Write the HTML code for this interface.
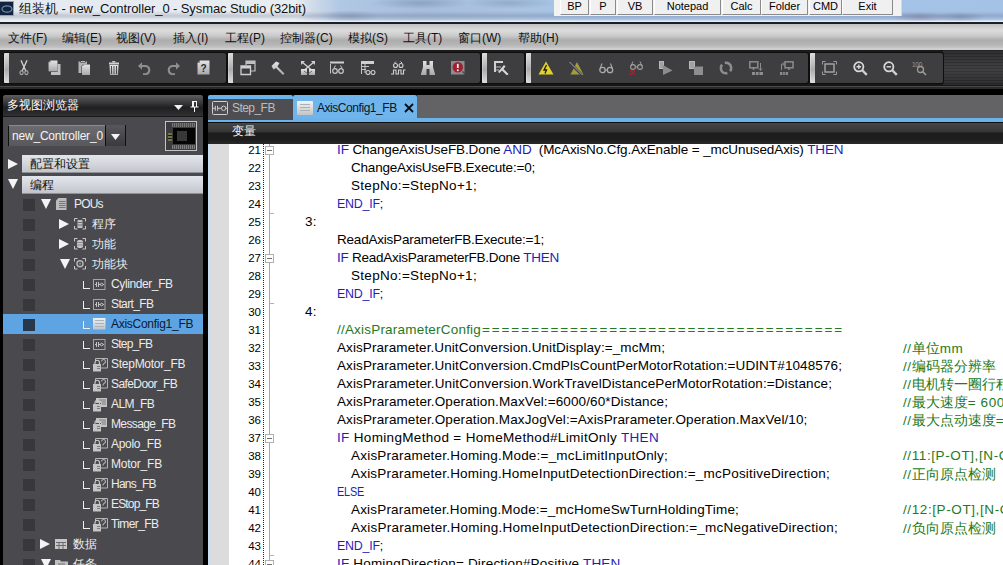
<!DOCTYPE html>
<html><head><meta charset="utf-8">
<style>
*{margin:0;padding:0;box-sizing:border-box}
html,body{width:1003px;height:565px;overflow:hidden;background:#000;font-family:"Liberation Sans",sans-serif}
.a{position:absolute}
.cj{display:inline-block;white-space:nowrap;letter-spacing:0}
.cm .cj{font-size:14px}
#title{left:0;top:0;width:1003px;height:22px;background:linear-gradient(180deg,rgba(255,255,255,0) 0,rgba(255,255,255,0) 11px,rgba(90,90,120,0.25) 16px,rgba(255,255,255,0.1) 20px,#e8eef6 21px,#e8eef6 22px),linear-gradient(90deg,#e4eaf0 0px,#e8edf2 295px,#d0dcea 312px,#b0c8e4 340px,#a6bedc 420px,#aac4e2 520px,#a6c4e6 560px,#a4c2e6 1003px)}
#title .t{left:19px;top:1px;font-size:13px;line-height:15px;letter-spacing:-0.1px;color:#111;white-space:nowrap}
#btns{left:554px;top:0;width:348px;height:16px;background:#f2f2f2;border-right:1px solid #d8d8d8}
.bt{position:absolute;top:0;height:15px;background:#f0f0f0;border-right:1px solid #8a8a8a;border-bottom:1px solid #8a8a8a;border-left:1px solid #fff;font-size:11px;line-height:12px;text-align:center;color:#000}
#tline{left:0;top:22px;width:1003px;height:2px;background:#1c2026}
#menu{left:0;top:24px;width:1003px;height:26px;background:linear-gradient(180deg,#c0c0c0 0%,#d2d2d2 14%,#dcdcdc 25%,#cacaca 45%,#adadad 62%,#b4b4b4 78%,#c2c2c2 90%,#d6d6d6 97%,#c0c0c0 100%)}
.mi{position:absolute;top:7px;font-size:12px;line-height:14px;color:#111;white-space:nowrap}
#tb{left:0;top:50px;width:1003px;height:39px;background:linear-gradient(180deg,#1a1a1a 0,#161616 36px,#4a4a4a 36px,#4a4a4a 37px,#2a2a2a 37px,#2a2a2a 39px)}
.grp{position:absolute;top:2.5px;height:30.5px;background:#3e3e40;border-radius:2px;box-shadow:0 0 0 1px #0e0e0e}
.grip{position:absolute;left:0;top:0;width:5px;height:30.5px;background:linear-gradient(180deg,#dcdcdc 0%,#c4c4c4 30%,#acacac 55%,#c8c8c8 80%,#dedede 100%);border-radius:1px 0 0 1px;box-shadow:inset 1px 0 0 rgba(255,255,255,0.25)}
.ic{position:absolute;top:10px}
#panel{left:3px;top:95px;width:200px;height:470px;background:#4a494e;border-radius:3px 3px 0 0;overflow:hidden}
#ph{left:0;top:0;width:200px;height:21px;background:linear-gradient(180deg,#5c5c5e 0%,#3a3a3c 35%,#202022 60%,#303032 100%)}
.sec{position:absolute;left:19px;width:181px;height:18px;background:linear-gradient(180deg,#e2e5ea 0%,#d2d6dc 55%,#c2c6cc 100%);border-bottom:1px solid #8e9298;font-size:12px;color:#111;padding-left:8px;line-height:18px;white-space:nowrap}
.trt{font-size:12px;line-height:20px;white-space:nowrap}
.row{position:absolute;left:0;width:200px;height:20px;font-size:11.5px;color:#ececec;white-space:nowrap}
.sq{position:absolute;left:20px;top:4px;width:12px;height:12px;background:#38383c}
#ed{left:208px;top:95px;width:795px;height:470px;background:#fff;overflow:hidden}
#tabs{left:0;top:0;width:795px;height:27px;background:#000}
.tabt{font-size:12px;white-space:nowrap}
#code{left:0;top:49px;width:795px;height:421px;background:#fff}
.ln{position:absolute;left:22px;width:31px;text-align:right;font-size:11.5px;line-height:18px;color:#000}
.cl{position:absolute;font-size:13.5px;line-height:18px;color:#000;white-space:pre}
.k{color:#1e1eb8}
.g{color:#237a23}
</style></head><body>
<div id="title" class="a">
  <div class="a" style="left:-1px;top:1px;width:15px;height:15px;background:#14233c;border:1px solid #9aa0a8"><svg class="a" style="left:1px;top:2px" width="12" height="10"><ellipse cx="6" cy="5" rx="5" ry="3.2" fill="none" stroke="#6a8cb8" stroke-width="1.2"/></svg></div>
  <div class="a" style="left:300px;top:0;width:260px;height:21px;background:radial-gradient(ellipse 30px 6px at 50px 16px,rgba(90,100,120,0.25),transparent),radial-gradient(ellipse 50px 6px at 120px 3px,rgba(80,100,130,0.3),transparent),radial-gradient(ellipse 45px 6px at 210px 3px,rgba(80,100,130,0.25),transparent)"></div>
  <div class="a" style="left:880px;top:9px;width:123px;height:12px;background:radial-gradient(ellipse 30px 5px at 40px 8px,rgba(110,90,120,0.35),transparent),radial-gradient(ellipse 25px 5px at 80px 8px,rgba(90,90,110,0.3),transparent)"></div>
  <div class="a t"><span class="cj" style="width:3em">组装机</span> - new_Controller_0 - Sysmac Studio (32bit)</div>
</div>
<div id="btns" class="a">
  <div class="bt" style="left:6px;width:29px">BP</div>
  <div class="bt" style="left:36px;width:26px">P</div>
  <div class="bt" style="left:63px;width:36px">VB</div>
  <div class="bt" style="left:100px;width:67px">Notepad</div>
  <div class="bt" style="left:168px;width:39px">Calc</div>
  <div class="bt" style="left:207px;width:47px">Folder</div>
  <div class="bt" style="left:255px;width:33px">CMD</div>
  <div class="bt" style="left:288px;width:51px">Exit</div>
</div>
<div id="tline" class="a"></div>
<div id="menu" class="a">
  <span class="mi" style="left:8px"><span class="cj" style="width:2em">文件</span>(F)</span>
  <span class="mi" style="left:62px"><span class="cj" style="width:2em">编辑</span>(E)</span>
  <span class="mi" style="left:116px"><span class="cj" style="width:2em">视图</span>(V)</span>
  <span class="mi" style="left:173px"><span class="cj" style="width:2em">插入</span>(I)</span>
  <span class="mi" style="left:225px"><span class="cj" style="width:2em">工程</span>(P)</span>
  <span class="mi" style="left:280px"><span class="cj" style="width:3em">控制器</span>(C)</span>
  <span class="mi" style="left:348px"><span class="cj" style="width:2em">模拟</span>(S)</span>
  <span class="mi" style="left:403px"><span class="cj" style="width:2em">工具</span>(T)</span>
  <span class="mi" style="left:458px"><span class="cj" style="width:2em">窗口</span>(W)</span>
  <span class="mi" style="left:518px"><span class="cj" style="width:2em">帮助</span>(H)</span>
</div>
<div id="tb" class="a">
  <div class="a" style="left:943px;top:0;width:60px;height:35px;background:repeating-linear-gradient(180deg,rgba(0,0,0,0.08) 0 1px,rgba(255,255,255,0.03) 1px 3px),linear-gradient(180deg,#262628 0%,#303032 25%,#3a3a3c 55%,#313133 80%,#262628 100%)"></div>
  <div class="grp" style="left:4px;width:222px"><div class="grip"></div></div>
  <div class="grp" style="left:228px;width:252px"><div class="grip"></div></div>
  <div class="grp" style="left:482px;width:42px"><div class="grip"></div></div>
  <div class="grp" style="left:526px;width:282px"><div class="grip"></div></div>
  <div class="grp" style="left:810px;width:133px"><div class="grip"></div></div>
<svg width="0" height="0" style="position:absolute"><defs><linearGradient id="tg" x1="0" y1="0" x2="0" y2="1"><stop offset="0" stop-color="#e4e4e4"/><stop offset="1" stop-color="#a8a8a8"/></linearGradient></defs></svg>
<svg class="a" style="left:19px;top:10px" width="10" height="16" viewBox="0 0 10 16"><path d="M2.2 0.8L6.8 11M7.8 0.8L3.2 11" stroke="#d0d0d0" stroke-width="1.4" stroke-linecap="round"/><ellipse cx="2.6" cy="12.6" rx="1.6" ry="2" fill="none" stroke="#a4a4a4" stroke-width="1.2"/><ellipse cx="7.4" cy="12.6" rx="1.6" ry="2" fill="none" stroke="#a4a4a4" stroke-width="1.2"/></svg>
<svg class="a" style="left:48px;top:10px" width="13" height="16" viewBox="0 0 13 16"><path d="M3 4H12.5V15H3Z" fill="#c0c0c0"/><path d="M2.5 1H9.5V12H0V3.5Z" fill="#2e2e2e"/><path d="M2.5 0.5H9.5V11.5H0.5V2.5Z" fill="url(#tg)"/><path d="M0.5 2.5L2.5 0.5V2.5Z" fill="#777"/></svg>
<svg class="a" style="left:78px;top:10px" width="13" height="16" viewBox="0 0 13 16"><path d="M0.5 1.5H9V13H0.5Z" fill="#b4b4b4"/><rect x="2.5" y="0.8" width="5" height="2" rx="0.5" fill="#3a3a3a"/><rect x="3" y="1.2" width="4" height="1" fill="#dcdcdc"/><path d="M5 4.5H12V15H3.5V6Z" fill="#2e2e2e"/><path d="M5.5 4.5H12V15H4V6Z" fill="url(#tg)"/><path d="M4 6L5.5 4.5V6Z" fill="#777"/></svg>
<svg class="a" style="left:108px;top:10px" width="12" height="16" viewBox="0 0 12 16"><rect x="4" y="1" width="3.5" height="1.5" rx="0.7" fill="#c8c8c8"/><rect x="1" y="2.5" width="10" height="2" fill="#cfcfcf"/><path d="M1.5 5H10.5L10 15H2Z" fill="url(#tg)"/><rect x="3" y="6" width="1" height="8" fill="#4a4a4a"/><rect x="5.5" y="6" width="1" height="8" fill="#5a5a5a"/><rect x="8" y="6" width="1" height="8" fill="#4a4a4a"/></svg>
<svg class="a" style="left:137px;top:11px" width="15" height="14" viewBox="0 0 15 14"><path d="M1 5L5 1.2V8.8Z" fill="#8e8e8e"/><path d="M4 5H9A4.2 4.2 0 0 1 9 13.2H6" fill="none" stroke="#8e8e8e" stroke-width="2"/></svg>
<svg class="a" style="left:166px;top:11px" width="15" height="14" viewBox="0 0 15 14"><path d="M14 5L10 1.2V8.8Z" fill="#8e8e8e"/><path d="M11 5H6A4.2 4.2 0 0 0 6 13.2H9" fill="none" stroke="#8e8e8e" stroke-width="2"/></svg>
<svg class="a" style="left:197px;top:10px" width="13" height="15" viewBox="0 0 13 15"><path d="M3 0.5H12.5V14.5H0.5V3Z" fill="url(#tg)"/><path d="M3 0.5V3H0.5" fill="#888"/><text x="6.5" y="12" font-family="Liberation Sans" font-weight="bold" font-size="10" text-anchor="middle" fill="#2a2a2a">?</text></svg>
<svg class="a" style="left:240px;top:10px" width="16" height="16" viewBox="0 0 16 16"><path d="M6 1H15V11H6Z" fill="none" stroke="#c0c0c0" stroke-width="1.2"/><path d="M6 1H15V4H6Z" fill="#c0c0c0"/><rect x="0" y="5" width="11" height="9.5" fill="#3e3e3f"/><path d="M1 6H10.5V14.5H1Z" fill="none" stroke="#d0d0d0" stroke-width="1.3"/><path d="M1 6H10.5V8.5H1Z" fill="#d0d0d0"/></svg>
<svg class="a" style="left:271px;top:11px" width="14" height="14" viewBox="0 0 14 14"><path d="M0.5 5L5 0.5L8.5 2L6.5 5.5L13.5 12.5L12 14L5 7L2.5 8.5Z" fill="url(#tg)"/></svg>
<svg class="a" style="left:301px;top:11px" width="14" height="14" viewBox="0 0 14 14"><path d="M1 1L13 11M13 1L1 11" stroke="#d0d0d0" stroke-width="1.4"/><path d="M0 0H4L0 4ZM14 0H10L14 4Z" fill="#d0d0d0"/><path d="M0 8H6V14H0ZM8 8H14V14H8Z" fill="url(#tg)"/><path d="M3 10L7 13M11 10L7 13" stroke="#555" stroke-width="0.8"/></svg>
<svg class="a" style="left:330px;top:11px" width="15" height="13" viewBox="0 0 15 13"><path d="M0.5 3V12.5" stroke="#c4c4c4"/><path d="M0 0.5H14V2.5H0Z" fill="#d0d0d0"/><circle cx="5" cy="10" r="2.3" fill="none" stroke="#c8c8c8" stroke-width="1.2"/><circle cx="11" cy="10" r="2.3" fill="none" stroke="#c8c8c8" stroke-width="1.2"/><path d="M4 7L5.5 4.5M12 7L10.5 4.5" stroke="#c8c8c8"/></svg>
<svg class="a" style="left:361px;top:11px" width="15" height="14" viewBox="0 0 15 14"><path d="M0 0H13V3H0Z" fill="#d0d0d0"/><path d="M0.5 3V13M0 5.5H8M0 8.5H5M4 3V12" stroke="#c4c4c4"/><circle cx="7" cy="11.5" r="2" fill="none" stroke="#d0d0d0" stroke-width="1.1"/><circle cx="12" cy="11.5" r="2" fill="none" stroke="#d0d0d0" stroke-width="1.1"/></svg>
<svg class="a" style="left:391px;top:11px" width="15" height="14" viewBox="0 0 15 14"><circle cx="4.5" cy="4.5" r="2" fill="none" stroke="#d0d0d0" stroke-width="1.1"/><circle cx="10" cy="4.5" r="2" fill="none" stroke="#d0d0d0" stroke-width="1.1"/><path d="M3.5 2L5 0.5M11 2L9.5 0.5" stroke="#d0d0d0"/><path d="M0 13H2.5V9H5V13H7.5V9H10V13H12.5V9H14.5" fill="none" stroke="#d0d0d0" stroke-width="1.1"/></svg>
<svg class="a" style="left:421px;top:11px" width="14" height="14" viewBox="0 0 14 14"><path d="M2 0H5.5V4H8.5V0H12V6L14 13V14H8.5V8H5.5V14H0V13L2 6Z" fill="url(#tg)"/></svg>
<svg class="a" style="left:451px;top:11px" width="14" height="14" viewBox="0 0 14 14"><rect x="0" y="0" width="13.5" height="13.5" fill="#8c8c8c"/><circle cx="6.8" cy="6.2" r="5.2" fill="#a02030"/><path d="M6.8 2.8V7" stroke="#f0f0f0" stroke-width="1.8"/><circle cx="6.8" cy="9.2" r="1" fill="#f0f0f0"/><path d="M11 11H13V13" stroke="#333" stroke-width="0.8" fill="none"/></svg>
<svg class="a" style="left:494px;top:11px" width="15" height="14" viewBox="0 0 15 14"><path d="M0 0H9V2H0ZM0 2V11H2V2Z" fill="#d0d0d0"/><path d="M2 6H7M2 9H5" stroke="#bbb"/><path d="M4 11L10 4L11.5 5.5L9.5 8L14.5 13L13 14.5L8 9.5L5.5 12Z" fill="#d8d8d8"/></svg>
<svg class="a" style="left:538px;top:11px" width="16" height="14" viewBox="0 0 16 14"><path d="M8 0.5L15.5 13.5H0.5Z" fill="#e2d22a"/><path d="M8.5 4L6 9H8.5L7 12.5" stroke="#1a1a1a" stroke-width="1.3" fill="none"/></svg>
<svg class="a" style="left:568px;top:11px" width="16" height="14" viewBox="0 0 16 14"><path d="M9 1L15.5 13.5H2.5Z" fill="#a39c3a"/><path d="M1 1L14 14" stroke="#3e3e3f" stroke-width="2.5"/><path d="M1.5 1L14.5 14" stroke="#a8a8a8" stroke-width="1"/></svg>
<svg class="a" style="left:599px;top:12px" width="15" height="12" viewBox="0 0 15 12"><circle cx="3.5" cy="8" r="2.7" fill="none" stroke="#aaa" stroke-width="1.3"/><circle cx="11" cy="8" r="2.7" fill="none" stroke="#aaa" stroke-width="1.3"/><path d="M6 8H8.5M1 7L3 1.5M13.5 7L11.5 1.5" stroke="#aaa" stroke-width="1.1" fill="none"/></svg>
<svg class="a" style="left:629px;top:11px" width="15" height="14" viewBox="0 0 15 14"><circle cx="4" cy="6" r="2.4" fill="none" stroke="#a0a0a0" stroke-width="1.1"/><circle cx="11" cy="6" r="2.4" fill="none" stroke="#a0a0a0" stroke-width="1.1"/><path d="M6.4 6H8.6M2 5L4 0.5M13 5L11 0.5" stroke="#a0a0a0" fill="none"/><path d="M1 9L6 14M6 9L1 14" stroke="#a02030" stroke-width="1.8"/></svg>
<svg class="a" style="left:658px;top:11px" width="15" height="14" viewBox="0 0 15 14"><path d="M1 0H6V8H1Z" fill="#b8b8b8"/><path d="M2 2H5M2 4H5M2 6H5" stroke="#777" stroke-width="0.7"/><path d="M5 4L14.5 9.5L5 14Z" fill="#8c8c8c"/></svg>
<svg class="a" style="left:689px;top:11px" width="14" height="14" viewBox="0 0 14 14"><path d="M0 0H6V8H0Z" fill="#b8b8b8"/><path d="M1 2H5M1 4H5M1 6H5" stroke="#777" stroke-width="0.7"/><rect x="5" y="5.5" width="9" height="8.5" fill="#8e8e8e"/></svg>
<svg class="a" style="left:719px;top:11px" width="14" height="14" viewBox="0 0 14 14"><circle cx="7" cy="7" r="5.2" fill="none" stroke="#8c8c8c" stroke-width="2.6" stroke-dasharray="12.5 3.2" transform="rotate(79 7 7)"/></svg>
<svg class="a" style="left:749px;top:11px" width="15" height="14" viewBox="0 0 15 14"><rect x="0.8" y="0.8" width="8" height="6" fill="none" stroke="#8c8c8c" stroke-width="1.5"/><path d="M4.5 7V9" stroke="#8c8c8c" stroke-width="1.5"/><path d="M11.5 2V9M10 7.5L11.5 9.5L13 7.5" stroke="#8c8c8c" fill="none"/><path d="M3 11H14V14H3Z" fill="#8c8c8c"/><path d="M6.5 11V14M10 11V14" stroke="#3e3e3f" stroke-width="0.8"/></svg>
<svg class="a" style="left:779px;top:11px" width="15" height="14" viewBox="0 0 15 14"><rect x="6" y="0.8" width="8" height="6" fill="none" stroke="#8c8c8c" stroke-width="1.5"/><path d="M10 7V9" stroke="#8c8c8c" stroke-width="1.5"/><path d="M2.5 9V3H5M4 1.5L5.5 3L4 4.5" stroke="#8c8c8c" fill="none"/><path d="M1 11H9V14H1Z" fill="#8c8c8c"/><path d="M3.7 11V14M6.3 11V14" stroke="#3e3e3f" stroke-width="0.8"/></svg>
<svg class="a" style="left:822px;top:11px" width="15" height="14" viewBox="0 0 15 14"><path d="M0.5 3.5V0.5H3.5M11.5 0.5H14.5V3.5M14.5 10.5V13.5H11.5M3.5 13.5H0.5V10.5" fill="none" stroke="#9c9c9c"/><rect x="3" y="3" width="9" height="8" fill="none" stroke="#a8a8a8" stroke-width="1.4"/></svg>
<svg class="a" style="left:853px;top:11px" width="15" height="15" viewBox="0 0 15 15"><circle cx="5.8" cy="5.8" r="4.6" fill="none" stroke="#d8d8d8" stroke-width="1.8"/><path d="M3.5 5.8H8.1M5.8 3.5V8.1" stroke="#d8d8d8" stroke-width="1.4"/><path d="M9 9L13.8 13.8" stroke="#d0d0d0" stroke-width="2.4"/></svg>
<svg class="a" style="left:883px;top:11px" width="15" height="15" viewBox="0 0 15 15"><circle cx="5.8" cy="5.8" r="4.6" fill="none" stroke="#d8d8d8" stroke-width="1.8"/><path d="M3.5 5.8H8.1" stroke="#d8d8d8" stroke-width="1.4"/><path d="M9 9L13.8 13.8" stroke="#d0d0d0" stroke-width="2.4"/></svg>
<svg class="a" style="left:912px;top:11px" width="15" height="15" viewBox="0 0 15 15"><text x="0" y="6" font-family="Liberation Sans" font-size="6.5" fill="#9c9c9c" letter-spacing="-0.3">100</text><circle cx="8.5" cy="8.5" r="3" fill="none" stroke="#9c9c9c" stroke-width="1.3"/><path d="M10.5 10.5L14 14" stroke="#9c9c9c" stroke-width="1.6"/></svg>
</div>
<div id="panel" class="a">
  <div id="ph" class="a"><div class="a" style="left:4px;top:3px;font-size:12px;line-height:15px;color:#fafafa;white-space:nowrap"><span class="cj" style="width:6em">多视图浏览器</span></div>
   <svg class="a" style="left:171px;top:10px" width="9" height="5"><path d="M0 0H9L4.5 5Z" fill="#f0f0f0"/></svg>
   <svg class="a" style="left:187px;top:6px" width="9" height="11" viewBox="0 0 9 11"><path d="M2 0.5H7M2.5 0.5V6M6.5 0.5V6M0.5 6H8.5M4.5 6V11" stroke="#f4f4f4" fill="none"/><rect x="2" y="1" width="2" height="5" fill="#f4f4f4"/></svg>
  </div>
  <div class="a" style="left:0;top:21px;width:200px;height:1px;background:#18181a"></div>
  <div class="a" style="left:5px;top:30px;width:118px;height:21px;background:linear-gradient(180deg,#6c6c70,#58585c);border-left:1px solid #111;border-top:1px solid #8c8c90;border-right:1px solid #111">
    <div class="a" style="left:3px;top:3px;font-size:12px;color:#f4f4f4;letter-spacing:-0.2px;white-space:nowrap">new_Controller_0</div>
    <div class="a" style="left:96px;top:-1px;width:1px;height:21px;background:#101010"></div>
    <div class="a" style="left:97px;top:-1px;width:19px;height:21px;background:linear-gradient(180deg,#58585c,#3a3a3e)"></div><div class="a" style="left:116px;top:-1px;width:1px;height:21px;background:#101010"></div>
    <svg class="a" style="left:102px;top:8px" width="9" height="6"><path d="M0 0H9L4.5 6Z" fill="#f4f4f4"/></svg>
  </div>
  <div class="a" style="left:162px;top:26px;width:32px;height:30px;border:1px solid #c4c4c4;background:#3c3c3e">
    <div class="a" style="left:6px;top:1px;width:23px;height:4px;background:repeating-linear-gradient(90deg,#767676 0 1px,#4e4e4e 1px 2px)"></div>
    <div class="a" style="left:7px;top:6px;width:22px;height:16px;background:#050505"></div>
    <div class="a" style="left:11px;top:9px;width:10px;height:10px;background:#383838"></div>
    <div class="a" style="left:6px;top:23px;width:23px;height:4px;background:repeating-linear-gradient(90deg,#7e7e7e 0 1px,#4e4e4e 1px 2px)"></div>
    <div class="a" style="left:2px;top:11px;width:4px;height:8px;background:repeating-linear-gradient(180deg,#74743c 0 2px,#1a1a1a 2px 3px)"></div>
  </div>
  <svg class="a" style="left:5px;top:64px" width="11" height="10"><path d="M0 0L10 5L0 10Z" fill="#f4f4f4"/></svg>
  <div class="sec" style="top:60px"><span class="cj" style="width:5em">配置和设置</span></div>
  <svg class="a" style="left:5px;top:84px" width="10" height="10"><path d="M0 0H10L5 10Z" fill="#f4f4f4"/></svg>
  <div class="sec" style="top:81px"><span class="cj" style="width:2em">编程</span></div>
<svg width="0" height="0" style="position:absolute"><defs><linearGradient id="dg2" x1="0" y1="0" x2="0" y2="1"><stop offset="0" stop-color="#f0f0f0"/><stop offset="1" stop-color="#c0c4c8"/></linearGradient></defs></svg>
<div class="a" style="left:0;top:219px;width:200px;height:20px;background:#5ea3e2"></div>
<div class="a" style="left:20px;top:104px;width:12px;height:12px;background:#38373c"></div>
<div class="a" style="left:20px;top:124px;width:12px;height:12px;background:#38373c"></div>
<div class="a" style="left:20px;top:144px;width:12px;height:12px;background:#38373c"></div>
<div class="a" style="left:20px;top:164px;width:12px;height:12px;background:#38373c"></div>
<div class="a" style="left:20px;top:184px;width:12px;height:12px;background:#38373c"></div>
<div class="a" style="left:20px;top:204px;width:12px;height:12px;background:#38373c"></div>
<div class="a" style="left:20px;top:224px;width:12px;height:12px;background:#27384c"></div>
<div class="a" style="left:20px;top:244px;width:12px;height:12px;background:#38373c"></div>
<div class="a" style="left:20px;top:264px;width:12px;height:12px;background:#38373c"></div>
<div class="a" style="left:20px;top:284px;width:12px;height:12px;background:#38373c"></div>
<div class="a" style="left:20px;top:304px;width:12px;height:12px;background:#38373c"></div>
<div class="a" style="left:20px;top:324px;width:12px;height:12px;background:#38373c"></div>
<div class="a" style="left:20px;top:344px;width:12px;height:12px;background:#38373c"></div>
<div class="a" style="left:20px;top:364px;width:12px;height:12px;background:#38373c"></div>
<div class="a" style="left:20px;top:384px;width:12px;height:12px;background:#38373c"></div>
<div class="a" style="left:20px;top:404px;width:12px;height:12px;background:#38373c"></div>
<div class="a" style="left:20px;top:424px;width:12px;height:12px;background:#38373c"></div>
<div class="a" style="left:20px;top:444px;width:12px;height:12px;background:#38373c"></div>
<div class="a" style="left:20px;top:464px;width:12px;height:12px;background:#38373c"></div>
<svg class="a" style="left:38px;top:104px" width="10" height="10"><path d="M0 0H10L5 10Z" fill="#f4f4f4"/></svg>
<svg class="a" style="left:53px;top:103px" width="11" height="12" viewBox="0 0 11 12"><path d="M2.5 0H10.5V12H0V2.5Z" fill="#bcbcbc"/><path d="M3 3.5H9.5M3 5.5H9.5M3 7.5H9.5M3 9.5H9.5" stroke="#6e6e6e" stroke-width="0.9"/></svg>
<div class="a trt" style="left:71px;top:99px;color:#ececec;letter-spacing:-0.8px">POUs</div>
<svg class="a" style="left:56px;top:124px" width="11" height="10"><path d="M0 0L10 5L0 10Z" fill="#f4f4f4"/></svg>
<svg class="a" style="left:71px;top:123px" width="13" height="12" viewBox="0 0 13 12"><path d="M0.5 3.5V0.5H3.5M8.5 0.5H11.5V3.5M11.5 8V11H8.5M3.5 11H0.5V8" fill="none" stroke="#c8c8c8"/><rect x="3.5" y="2" width="5" height="8" fill="#c0c0c0"/><path d="M3.5 4.5H8.5M3.5 7H8.5" stroke="#6a6a6a" stroke-width="0.9"/></svg>
<div class="a trt" style="left:89px;top:119px;color:#ececec;letter-spacing:-0.4px"><span class="cj" style="width:2em">程序</span></div>
<svg class="a" style="left:56px;top:144px" width="11" height="10"><path d="M0 0L10 5L0 10Z" fill="#f4f4f4"/></svg>
<svg class="a" style="left:71px;top:143px" width="13" height="12" viewBox="0 0 13 12"><path d="M0.5 3.5V0.5H3.5M8.5 0.5H11.5V3.5M11.5 8V11H8.5M3.5 11H0.5V8" fill="none" stroke="#c8c8c8"/><rect x="3" y="2" width="6" height="8" rx="2" fill="#c8c8c8"/><path d="M2.5 4.5H9.5M2.5 7H9.5" stroke="#7a7a7a" stroke-width="0.8"/></svg>
<div class="a trt" style="left:89px;top:139px;color:#ececec;letter-spacing:-0.4px"><span class="cj" style="width:2em">功能</span></div>
<svg class="a" style="left:57px;top:164px" width="10" height="10"><path d="M0 0H10L5 10Z" fill="#f4f4f4"/></svg>
<svg class="a" style="left:71px;top:163px" width="13" height="12" viewBox="0 0 13 12"><path d="M0.5 3.5V0.5H3.5M8.5 0.5H11.5V3.5M11.5 8V11H8.5M3.5 11H0.5V8" fill="none" stroke="#c8c8c8"/><circle cx="6" cy="5.8" r="3" fill="none" stroke="#b8b8b8" stroke-width="1.4"/><circle cx="6" cy="5.8" r="1" fill="#909090"/></svg>
<div class="a trt" style="left:89px;top:159px;color:#ececec;letter-spacing:-0.4px"><span class="cj" style="width:3em">功能块</span></div>
<div class="a" style="left:80px;top:186px;width:7px;height:8px;border-left:1px solid #f0f0f0;border-bottom:1px solid #f0f0f0"></div>
<svg class="a" style="left:90px;top:184px" width="13" height="11" viewBox="0 0 13 11"><rect x="0.5" y="0.5" width="11.5" height="10" fill="none" stroke="#a4a4a6"/><path d="M2 5.5H3.5M3.5 3V8M5.5 3V8M5.5 5.5H7.5M10 5.5H11" stroke="#c4c4c4" fill="none"/><circle cx="8.7" cy="5.5" r="1.3" fill="none" stroke="#c4c4c4"/></svg>
<div class="a trt" style="left:108px;top:179px;color:#ececec;letter-spacing:-0.394px">Cylinder_FB</div>
<div class="a" style="left:80px;top:206px;width:7px;height:8px;border-left:1px solid #f0f0f0;border-bottom:1px solid #f0f0f0"></div>
<svg class="a" style="left:90px;top:204px" width="13" height="11" viewBox="0 0 13 11"><rect x="0.5" y="0.5" width="11.5" height="10" fill="none" stroke="#a4a4a6"/><path d="M2 5.5H3.5M3.5 3V8M5.5 3V8M5.5 5.5H7.5M10 5.5H11" stroke="#c4c4c4" fill="none"/><circle cx="8.7" cy="5.5" r="1.3" fill="none" stroke="#c4c4c4"/></svg>
<div class="a trt" style="left:108px;top:199px;color:#ececec;letter-spacing:-0.62px">Start_FB</div>
<div class="a" style="left:80px;top:226px;width:7px;height:8px;border-left:1px solid #f0f0f0;border-bottom:1px solid #f0f0f0"></div>
<svg class="a" style="left:90px;top:223px" width="13" height="12" viewBox="0 0 13 12"><rect x="0" y="0" width="12.5" height="11.5" fill="url(#dg2)"/><path d="M2 2.5H11M2 5.5H11M2 8.5H11" stroke="#a8b4c0"/></svg>
<div class="a trt" style="left:108px;top:219px;color:#0c1a30;letter-spacing:-0.275px">AxisConfig1_FB</div>
<div class="a" style="left:80px;top:246px;width:7px;height:8px;border-left:1px solid #f0f0f0;border-bottom:1px solid #f0f0f0"></div>
<svg class="a" style="left:90px;top:244px" width="13" height="11" viewBox="0 0 13 11"><rect x="0.5" y="0.5" width="11.5" height="10" fill="none" stroke="#a4a4a6"/><path d="M2 5.5H3.5M3.5 3V8M5.5 3V8M5.5 5.5H7.5M10 5.5H11" stroke="#c4c4c4" fill="none"/><circle cx="8.7" cy="5.5" r="1.3" fill="none" stroke="#c4c4c4"/></svg>
<div class="a trt" style="left:108px;top:239px;color:#ececec;letter-spacing:-0.786px">Step_FB</div>
<div class="a" style="left:80px;top:266px;width:7px;height:8px;border-left:1px solid #f0f0f0;border-bottom:1px solid #f0f0f0"></div>
<svg class="a" style="left:90px;top:263px" width="15" height="14" viewBox="0 0 15 14"><path d="M2.5 3V0.5H14.5V10H8" fill="none" stroke="#b4b4b4"/><path d="M8.5 3.5A2 2 0 1 1 11 5.5Q10 6 10 7.5" fill="none" stroke="#b4b4b4" stroke-width="1.1"/><path d="M2 6V4.5A2.2 2.2 0 0 1 6.5 4.5V6" fill="none" stroke="#c8c8c8" stroke-width="1.2"/><rect x="0" y="6" width="8" height="7.5" fill="#c4c4c4"/><path d="M4 8.5H7M4 10.5H7" stroke="#7c7c7c"/></svg>
<div class="a trt" style="left:108px;top:259px;color:#ececec;letter-spacing:-0.265px">StepMotor_FB</div>
<div class="a" style="left:80px;top:286px;width:7px;height:8px;border-left:1px solid #f0f0f0;border-bottom:1px solid #f0f0f0"></div>
<svg class="a" style="left:90px;top:283px" width="15" height="14" viewBox="0 0 15 14"><path d="M2.5 3V0.5H14.5V10H8" fill="none" stroke="#b4b4b4"/><path d="M8.5 3.5A2 2 0 1 1 11 5.5Q10 6 10 7.5" fill="none" stroke="#b4b4b4" stroke-width="1.1"/><path d="M2 6V4.5A2.2 2.2 0 0 1 6.5 4.5V6" fill="none" stroke="#c8c8c8" stroke-width="1.2"/><rect x="0" y="6" width="8" height="7.5" fill="#c4c4c4"/><path d="M4 8.5H7M4 10.5H7" stroke="#7c7c7c"/></svg>
<div class="a trt" style="left:108px;top:279px;color:#ececec;letter-spacing:-0.591px">SafeDoor_FB</div>
<div class="a" style="left:80px;top:306px;width:7px;height:8px;border-left:1px solid #f0f0f0;border-bottom:1px solid #f0f0f0"></div>
<svg class="a" style="left:90px;top:303px" width="15" height="14" viewBox="0 0 15 14"><path d="M3 0H14V9H8V5H3Z" fill="#c4c4c4"/><path d="M6 2H13M8.5 4H13M9 6H13" stroke="#6a6a6a" stroke-width="0.8"/><path d="M2 6V4.5A2.2 2.2 0 0 1 6.5 4.5V6" fill="none" stroke="#c8c8c8" stroke-width="1.2"/><rect x="0" y="6" width="8" height="7.5" fill="#c4c4c4"/><path d="M4 8.5H7M4 10.5H7" stroke="#7c7c7c"/></svg>
<div class="a trt" style="left:108px;top:299px;color:#ececec;letter-spacing:-0.565px">ALM_FB</div>
<div class="a" style="left:80px;top:326px;width:7px;height:8px;border-left:1px solid #f0f0f0;border-bottom:1px solid #f0f0f0"></div>
<svg class="a" style="left:90px;top:323px" width="15" height="14" viewBox="0 0 15 14"><path d="M3 0H14V9H8V5H3Z" fill="#c4c4c4"/><path d="M6 2H13M8.5 4H13M9 6H13" stroke="#6a6a6a" stroke-width="0.8"/><path d="M2 6V4.5A2.2 2.2 0 0 1 6.5 4.5V6" fill="none" stroke="#c8c8c8" stroke-width="1.2"/><rect x="0" y="6" width="8" height="7.5" fill="#c4c4c4"/><path d="M4 8.5H7M4 10.5H7" stroke="#7c7c7c"/></svg>
<div class="a trt" style="left:108px;top:319px;color:#ececec;letter-spacing:-0.63px">Message_FB</div>
<div class="a" style="left:80px;top:346px;width:7px;height:8px;border-left:1px solid #f0f0f0;border-bottom:1px solid #f0f0f0"></div>
<svg class="a" style="left:90px;top:343px" width="15" height="14" viewBox="0 0 15 14"><path d="M2.5 3V0.5H14.5V10H8" fill="none" stroke="#b4b4b4"/><path d="M8.5 3.5A2 2 0 1 1 11 5.5Q10 6 10 7.5" fill="none" stroke="#b4b4b4" stroke-width="1.1"/><path d="M2 6V4.5A2.2 2.2 0 0 1 6.5 4.5V6" fill="none" stroke="#c8c8c8" stroke-width="1.2"/><rect x="0" y="6" width="8" height="7.5" fill="#c4c4c4"/><path d="M4 8.5H7M4 10.5H7" stroke="#7c7c7c"/></svg>
<div class="a trt" style="left:108px;top:339px;color:#ececec;letter-spacing:-0.288px">Apolo_FB</div>
<div class="a" style="left:80px;top:366px;width:7px;height:8px;border-left:1px solid #f0f0f0;border-bottom:1px solid #f0f0f0"></div>
<svg class="a" style="left:90px;top:363px" width="15" height="14" viewBox="0 0 15 14"><path d="M2.5 3V0.5H14.5V10H8" fill="none" stroke="#b4b4b4"/><path d="M8.5 3.5A2 2 0 1 1 11 5.5Q10 6 10 7.5" fill="none" stroke="#b4b4b4" stroke-width="1.1"/><path d="M2 6V4.5A2.2 2.2 0 0 1 6.5 4.5V6" fill="none" stroke="#c8c8c8" stroke-width="1.2"/><rect x="0" y="6" width="8" height="7.5" fill="#c4c4c4"/><path d="M4 8.5H7M4 10.5H7" stroke="#7c7c7c"/></svg>
<div class="a trt" style="left:108px;top:359px;color:#ececec;letter-spacing:-0.211px">Motor_FB</div>
<div class="a" style="left:80px;top:386px;width:7px;height:8px;border-left:1px solid #f0f0f0;border-bottom:1px solid #f0f0f0"></div>
<svg class="a" style="left:90px;top:383px" width="15" height="14" viewBox="0 0 15 14"><path d="M2.5 3V0.5H14.5V10H8" fill="none" stroke="#b4b4b4"/><path d="M8.5 3.5A2 2 0 1 1 11 5.5Q10 6 10 7.5" fill="none" stroke="#b4b4b4" stroke-width="1.1"/><path d="M2 6V4.5A2.2 2.2 0 0 1 6.5 4.5V6" fill="none" stroke="#c8c8c8" stroke-width="1.2"/><rect x="0" y="6" width="8" height="7.5" fill="#c4c4c4"/><path d="M4 8.5H7M4 10.5H7" stroke="#7c7c7c"/></svg>
<div class="a trt" style="left:108px;top:379px;color:#ececec;letter-spacing:-0.747px">Hans_FB</div>
<div class="a" style="left:80px;top:406px;width:7px;height:8px;border-left:1px solid #f0f0f0;border-bottom:1px solid #f0f0f0"></div>
<svg class="a" style="left:90px;top:403px" width="15" height="14" viewBox="0 0 15 14"><path d="M2.5 3V0.5H14.5V10H8" fill="none" stroke="#b4b4b4"/><path d="M8.5 3.5A2 2 0 1 1 11 5.5Q10 6 10 7.5" fill="none" stroke="#b4b4b4" stroke-width="1.1"/><path d="M2 6V4.5A2.2 2.2 0 0 1 6.5 4.5V6" fill="none" stroke="#c8c8c8" stroke-width="1.2"/><rect x="0" y="6" width="8" height="7.5" fill="#c4c4c4"/><path d="M4 8.5H7M4 10.5H7" stroke="#7c7c7c"/></svg>
<div class="a trt" style="left:108px;top:399px;color:#ececec;letter-spacing:-0.838px">EStop_FB</div>
<div class="a" style="left:80px;top:426px;width:7px;height:8px;border-left:1px solid #f0f0f0;border-bottom:1px solid #f0f0f0"></div>
<svg class="a" style="left:90px;top:423px" width="15" height="14" viewBox="0 0 15 14"><path d="M2.5 3V0.5H14.5V10H8" fill="none" stroke="#b4b4b4"/><path d="M8.5 3.5A2 2 0 1 1 11 5.5Q10 6 10 7.5" fill="none" stroke="#b4b4b4" stroke-width="1.1"/><path d="M2 6V4.5A2.2 2.2 0 0 1 6.5 4.5V6" fill="none" stroke="#c8c8c8" stroke-width="1.2"/><rect x="0" y="6" width="8" height="7.5" fill="#c4c4c4"/><path d="M4 8.5H7M4 10.5H7" stroke="#7c7c7c"/></svg>
<div class="a trt" style="left:108px;top:419px;color:#ececec;letter-spacing:-0.617px">Timer_FB</div>
<svg class="a" style="left:37px;top:444px" width="11" height="10"><path d="M0 0L10 5L0 10Z" fill="#f4f4f4"/></svg>
<svg class="a" style="left:52px;top:444px" width="12" height="10" viewBox="0 0 12 10"><rect x="0" y="0" width="12" height="10" fill="#c8c8c8"/><path d="M1 3.5H11M1 6.5H11M4 3V10M8 3V10" stroke="#6a6a6a"/></svg>
<div class="a trt" style="left:70px;top:439px;color:#ececec;letter-spacing:-0.4px"><span class="cj" style="width:2em">数据</span></div>
<svg class="a" style="left:38px;top:464px" width="10" height="10"><path d="M0 0H10L5 10Z" fill="#f4f4f4"/></svg>
<svg class="a" style="left:52px;top:464px" width="13" height="11" viewBox="0 0 13 11"><path d="M0 1H5L6 2.5H13V11H0Z" fill="#c0c0c0"/><path d="M3 5H10M3 8H10" stroke="#707070"/></svg>
<div class="a trt" style="left:70px;top:459px;color:#ececec;letter-spacing:-0.4px"><span class="cj" style="width:2em">任务</span></div>
</div>
<div id="ed" class="a">
  <div id="tabs" class="a">
  <div class="a" style="left:0;top:0;width:85px;height:27px;background:#6cb2ea;border-radius:2px 2px 0 0"></div>
  <div class="a" style="left:0px;top:4px;width:85px;height:21px;background:#4e4e52"></div>
  <div class="a" style="left:85px;top:0;width:124px;height:27px;background:#6fb5eb;border-radius:2px 2px 0 0"></div>
  <div class="a" style="left:0;top:23px;width:795px;height:4px;background:#6cb2ea"></div><div class="a" style="left:0px;top:4px;width:85px;height:21px;background:#4e4e52"></div>
  <svg class="a" style="left:4px;top:6px" width="17" height="14" viewBox="0 0 17 14"><rect x="0.5" y="0.5" width="15" height="13" rx="1" fill="none" stroke="#cfcfcf"/><path d="M0.5 7.3H3.3M5.6 7.3H13.3M3.3 4.8V9.8M5.6 4.8V9.8" stroke="#cfcfcf" fill="none"/><circle cx="11.6" cy="7.3" r="2.2" fill="#4e4e52" stroke="#cfcfcf"/><path d="M13.8 7.3H15.5" stroke="#cfcfcf"/></svg>
  <div class="a tabt" style="left:24px;top:6px;color:#bcbcbc;letter-spacing:-0.55px">Step_FB</div>
  <svg class="a" style="left:89px;top:6px" width="16" height="14" viewBox="0 0 16 14"><defs><linearGradient id="dg" x1="0" y1="0" x2="0" y2="1"><stop offset="0" stop-color="#f4f4f4"/><stop offset="1" stop-color="#c4c4c4"/></linearGradient></defs><rect x="0" y="0" width="16" height="14" rx="1" fill="url(#dg)"/><path d="M3 3.5H13M3 6.5H13M3 9.5H13" stroke="#a8b0b8"/></svg>
  <div class="a tabt" style="left:109px;top:6px;color:#0c1424;letter-spacing:-0.45px">AxisConfig1_FB</div>
  <svg class="a" style="left:196px;top:8px" width="10" height="10" viewBox="0 0 10 10"><path d="M1 1L9 9M9 1L1 9" stroke="#0a0a14" stroke-width="1.8"/></svg>
  <div class="a" style="left:209px;top:0;width:586px;height:23px;background:#636366"></div>
</div>
<div class="a" style="left:0;top:27px;width:795px;height:1px;background:#101010"></div><div class="a" style="left:0;top:28px;width:795px;height:21px;background:linear-gradient(180deg,#464646 0%,#363636 40%,#2c2c2c 44%,#1c1c1c 48%,#1e1e1e 80%,#2a2a2a 100%)">
  <div class="a" style="left:24px;top:1px;font-size:12px;line-height:15px;color:#f4f4f4"><span class="cj" style="width:2em">变量</span></div>
</div>
  <div id="code" class="a">
  <div class="a" style="left:0;top:0;width:2px;height:421px;background:#c4e0f6"></div>
  <div class="a" style="left:2px;top:0;width:19px;height:421px;background:#dcdcdc"></div>
  <div class="a" style="left:55px;top:0;width:1px;height:421px;background:repeating-linear-gradient(180deg,#222 0 1px,transparent 1px 2px)"></div>
  <div class="a" style="left:61px;top:0;width:1px;height:421px;background:#a8a8a8"></div>
  <div class="a" style="left:57px;top:2px;width:9px;height:9px;border:1px solid #b0b0b0;background:#fff"><div class="a" style="left:1px;top:3px;width:5px;height:1px;background:#707070"></div></div>
  <div class="a" style="left:57px;top:110px;width:9px;height:9px;border:1px solid #b0b0b0;background:#fff"><div class="a" style="left:1px;top:3px;width:5px;height:1px;background:#707070"></div></div>
  <div class="a" style="left:57px;top:290px;width:9px;height:9px;border:1px solid #b0b0b0;background:#fff"><div class="a" style="left:1px;top:3px;width:5px;height:1px;background:#707070"></div></div>
  <div class="a" style="left:57px;top:416px;width:9px;height:9px;border:1px solid #b0b0b0;background:#fff"><div class="a" style="left:1px;top:3px;width:5px;height:1px;background:#707070"></div></div>
  <div class="a" style="left:61px;top:69px;width:5px;height:1px;background:#b0b0b0"></div>
  <div class="a" style="left:61px;top:159px;width:5px;height:1px;background:#b0b0b0"></div>
  <div class="a" style="left:61px;top:411px;width:5px;height:1px;background:#b0b0b0"></div>
<div class="cl" style="left:129px;top:-3px;letter-spacing:-0.104px"><span class="k">IF</span> ChangeAxisUseFB.Done <span class="k">AND</span>  (McAxisNo.Cfg.AxEnable = _mcUnusedAxis) <span class="k">THEN</span></div>
<div class="ln" style="top:-3px">21</div>
<div class="cl" style="left:143px;top:15px;letter-spacing:-0.203px">ChangeAxisUseFB.Execute:=0;</div>
<div class="ln" style="top:15px">22</div>
<div class="cl" style="left:143px;top:33px;letter-spacing:0.303px">StepNo:=StepNo+1;</div>
<div class="ln" style="top:33px">23</div>
<div class="cl" style="left:129px;top:51px;letter-spacing:-0.250px;transform:scaleX(0.9197);transform-origin:0 0"><span class="k">END_IF</span>;</div>
<div class="ln" style="top:51px">24</div>
<div class="cl" style="left:97px;top:69px;letter-spacing:0.117px">3:</div>
<div class="ln" style="top:69px">25</div>
<div class="cl" style="left:129px;top:87px;letter-spacing:-0.209px">ReadAxisParameterFB.Execute:=1;</div>
<div class="ln" style="top:87px">26</div>
<div class="cl" style="left:129px;top:105px;letter-spacing:-0.250px;transform:scaleX(0.9996);transform-origin:0 0"><span class="k">IF</span> ReadAxisParameterFB.Done <span class="k">THEN</span></div>
<div class="ln" style="top:105px">27</div>
<div class="cl" style="left:143px;top:123px;letter-spacing:0.303px">StepNo:=StepNo+1;</div>
<div class="ln" style="top:123px">28</div>
<div class="cl" style="left:129px;top:141px;letter-spacing:-0.250px;transform:scaleX(0.9197);transform-origin:0 0"><span class="k">END_IF</span>;</div>
<div class="ln" style="top:141px">29</div>
<div class="cl" style="left:97px;top:159px;letter-spacing:0.117px">4:</div>
<div class="ln" style="top:159px">30</div>
<div class="cl" style="left:129px;top:177px;letter-spacing:0.202px"><span class="g">//AxisPrarameterConfig</span></div>
<div class="ln" style="top:177px">31</div>
<div class="cl" style="left:129px;top:195px;letter-spacing:0.087px">AxisPrarameter.UnitConversion.UnitDisplay:=_mcMm;</div>
<div class="ln" style="top:195px">32</div>
<div class="cl g cm" style="left:695px;top:195px;letter-spacing:0.6px">//<span class="cj" style="width:2em">单位</span>mm</div>
<div class="cl" style="left:129px;top:213px;letter-spacing:0.098px">AxisPrarameter.UnitConversion.CmdPlsCountPerMotorRotation:=UDINT#1048576;</div>
<div class="ln" style="top:213px">33</div>
<div class="cl g cm" style="left:695px;top:213px;letter-spacing:0.6px">//<span class="cj" style="width:6em">编码器分辨率</span></div>
<div class="cl" style="left:129px;top:231px;letter-spacing:0.113px">AxisPrarameter.UnitConversion.WorkTravelDistancePerMotorRotation:=Distance;</div>
<div class="ln" style="top:231px">34</div>
<div class="cl g cm" style="left:695px;top:231px;letter-spacing:0.6px">//<span class="cj" style="width:7em">电机转一圈行程</span></div>
<div class="cl" style="left:129px;top:249px;letter-spacing:0.114px">AxisPrarameter.Operation.MaxVel:=6000/60*Distance;</div>
<div class="ln" style="top:249px">35</div>
<div class="cl g cm" style="left:695px;top:249px;letter-spacing:0.6px">//<span class="cj" style="width:4em">最大速度</span>= 6000</div>
<div class="cl" style="left:129px;top:267px;letter-spacing:0.111px">AxisPrarameter.Operation.MaxJogVel:=AxisPrarameter.Operation.MaxVel/10;</div>
<div class="ln" style="top:267px">36</div>
<div class="cl g cm" style="left:695px;top:267px;letter-spacing:0.6px">//<span class="cj" style="width:6em">最大点动速度</span>=<span class="cj" style="width:2em">最大</span></div>
<div class="cl" style="left:129px;top:285px;letter-spacing:0.331px"><span class="k">IF</span> HomingMethod = HomeMethod#LimitOnly <span class="k">THEN</span></div>
<div class="ln" style="top:285px">37</div>
<div class="cl" style="left:143px;top:303px;letter-spacing:0.212px">AxisPrarameter.Homing.Mode:=_mcLimitInputOnly;</div>
<div class="ln" style="top:303px">38</div>
<div class="cl g cm" style="left:695px;top:303px;letter-spacing:0.6px">//11:[P-OT],[N-OT]</div>
<div class="cl" style="left:143px;top:321px;letter-spacing:0.207px">AxisPrarameter.Homing.HomeInputDetectionDirection:=_mcPositiveDirection;</div>
<div class="ln" style="top:321px">39</div>
<div class="cl g cm" style="left:695px;top:321px;letter-spacing:0.6px">//<span class="cj" style="width:6em">正向原点检测</span></div>
<div class="cl" style="left:129px;top:339px;letter-spacing:-0.250px;transform:scaleX(0.8052);transform-origin:0 0"><span class="k">ELSE</span></div>
<div class="ln" style="top:339px">40</div>
<div class="cl" style="left:143px;top:357px;letter-spacing:0.184px">AxisPrarameter.Homing.Mode:=_mcHomeSwTurnHoldingTime;</div>
<div class="ln" style="top:357px">41</div>
<div class="cl g cm" style="left:695px;top:357px;letter-spacing:0.6px">//12:[P-OT],[N-OT]</div>
<div class="cl" style="left:143px;top:375px;letter-spacing:0.235px">AxisPrarameter.Homing.HomeInputDetectionDirection:=_mcNegativeDirection;</div>
<div class="ln" style="top:375px">42</div>
<div class="cl g cm" style="left:695px;top:375px;letter-spacing:0.6px">//<span class="cj" style="width:6em">负向原点检测</span></div>
<div class="cl" style="left:129px;top:393px;letter-spacing:-0.250px;transform:scaleX(0.9197);transform-origin:0 0"><span class="k">END_IF</span>;</div>
<div class="ln" style="top:393px">43</div>
<div class="cl" style="left:129px;top:411px;letter-spacing:0.186px"><span class="k">IF</span> HomingDirection= Direction#Positive <span class="k">THEN</span></div>
<div class="ln" style="top:411px">44</div>
<div class="cl g" style="left:274px;top:177px;letter-spacing:1.9px">=====================================</div>
</div>
</div>
</body></html>
